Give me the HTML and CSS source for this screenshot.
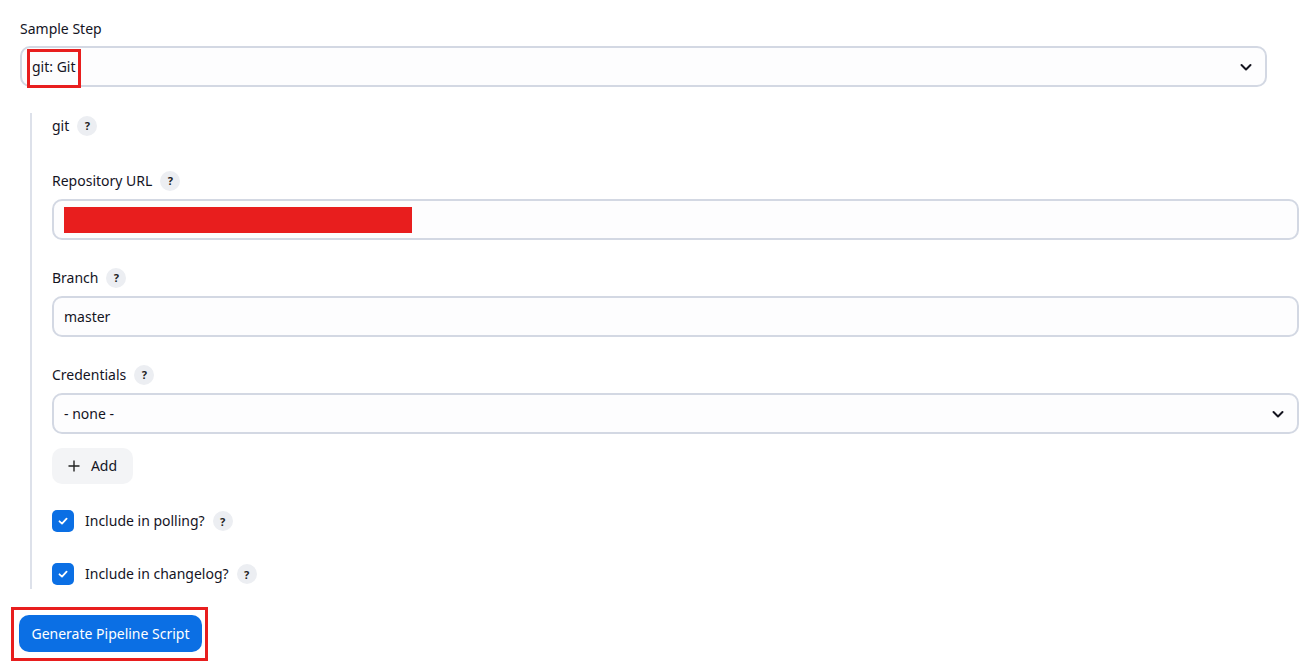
FILE: index.html
```html
<!DOCTYPE html>
<html>
<head>
<meta charset="utf-8">
<link rel="stylesheet" href="styles.css">
</head>
<body>
<div class="page">
  <div class="label top-label">Sample Step</div>
  <div class="select main-select">
    <span class="select-text">git: Git</span>
    <svg class="chev" width="14" height="14" viewBox="0 0 14 14"><path d="M2.5 5 L7 9.5 L11.5 5" fill="none" stroke="#14141f" stroke-width="2" stroke-linecap="round" stroke-linejoin="round"/></svg>
    <span class="mark mark-git"></span>
  </div>

  <div class="nested">
    <div class="label row-git">git <span class="help">?</span></div>

    <div class="label field-label">Repository URL <span class="help">?</span></div>
    <div class="input"><span class="redact"></span></div>

    <div class="label field-label">Branch <span class="help">?</span></div>
    <div class="input"><span class="input-text">master</span></div>

    <div class="label field-label">Credentials <span class="help">?</span></div>
    <div class="select">
      <span class="select-text">- none -</span>
      <svg class="chev" width="14" height="14" viewBox="0 0 14 14"><path d="M2.5 5 L7 9.5 L11.5 5" fill="none" stroke="#14141f" stroke-width="2" stroke-linecap="round" stroke-linejoin="round"/></svg>
    </div>
    <div class="add-btn"><svg width="12" height="12" viewBox="0 0 12 12"><path d="M6 0.5 V11.5 M0.5 6 H11.5" stroke="#222" stroke-width="1.4" fill="none"/></svg><span>Add</span></div>

    <div class="check-row first">
      <span class="checkbox"><svg width="12" height="12" viewBox="0 0 12 12"><path d="M2.5 6.3 L5 8.6 L9.6 3.6" fill="none" stroke="#fff" stroke-width="1.8" stroke-linecap="round" stroke-linejoin="round"/></svg></span>
      <span class="check-label">Include in polling?</span><span class="help">?</span>
    </div>
    <div class="check-row second">
      <span class="checkbox"><svg width="12" height="12" viewBox="0 0 12 12"><path d="M2.5 6.3 L5 8.6 L9.6 3.6" fill="none" stroke="#fff" stroke-width="1.8" stroke-linecap="round" stroke-linejoin="round"/></svg></span>
      <span class="check-label">Include in changelog?</span><span class="help">?</span>
    </div>
  </div>

  <div class="gen-wrap">
    <button class="gen-btn">Generate Pipeline Script</button>
    <span class="mark mark-gen"></span>
  </div>
</div>
</body>
</html>
```
FILE: styles.css
```css
* { box-sizing: border-box; }
html, body { margin: 0; padding: 0; background: #fff; }
body {
  font-family: "Noto Sans", "Open Sans", sans-serif;
  font-size: 14px;
  color: #14141f;
  width: 1316px;
  height: 662px;
  overflow: hidden;
}
.page { padding: 19px 0 0 20px; }
.label { line-height: 20px; display: flex; align-items: center; }
.top-label { height: 20px; margin-bottom: 7px; }
.select, .input {
  position: relative;
  height: 41px;
  border: 2px solid #d3d8e3;
  border-radius: 10px;
  background: #fdfdfe;
  display: flex;
  align-items: center;
  padding-left: 10px;
}
.main-select { width: 1247px; }
.select-text, .input-text { line-height: 20px; }
.chev { position: absolute; right: 12px; top: 12px; }
.mark { position: absolute; border: 3px solid #e81e1e; }
.mark-git { left: 5px; top: 1px; width: 54px; height: 39px; }
.nested {
  margin: 26px 0 0 10px;
  border-left: 2px solid #dde1ea;
  padding: 3px 0 4px 20px;
  width: 1269px;
}
.nested .select, .nested .input { width: 1247px; }
.row-git { height: 20px; margin-bottom: 35px; }
.field-label { height: 20px; margin-bottom: 8px; }
.input + .field-label, .select + .field-label { margin-top: 28px; }
.help {
  display: inline-flex;
  align-items: center;
  justify-content: center;
  width: 20px;
  height: 20px;
  border-radius: 50%;
  background: #eceef2;
  font-size: 11px;
  font-weight: 700;
  margin-left: 8px;
  color: #222;
}
.redact { display: block; width: 348px; height: 26px; background: #e81e1e; }
.add-btn {
  margin-top: 14px;
  width: 81px;
  height: 36px;
  border-radius: 10px;
  background: #f3f4f6;
  display: flex;
  align-items: center;
  justify-content: center;
  gap: 11px;
}
.add-btn span { line-height: 20px; }
.check-row { display: flex; align-items: center; height: 22px; }
.check-row.first { margin-top: 26px; }
.check-row.second { margin-top: 31px; }
.checkbox {
  width: 22px;
  height: 22px;
  border-radius: 5px;
  background: #0b6fe4;
  display: inline-flex;
  align-items: center;
  justify-content: center;
  margin-right: 11px;
}
.check-label { line-height: 20px; }
.gen-wrap { position: relative; margin-top: 26px; margin-left: -1px; width: 183px; }
.gen-btn {
  width: 183px;
  height: 37px;
  border: none;
  border-radius: 10px;
  background: #0b6fe4;
  color: #fff;
  font-family: inherit;
  font-size: 14px;
  font-weight: 400;
  padding: 0;
}
.mark-gen { left: -8px; top: -8px; width: 197px; height: 54px; }
```
